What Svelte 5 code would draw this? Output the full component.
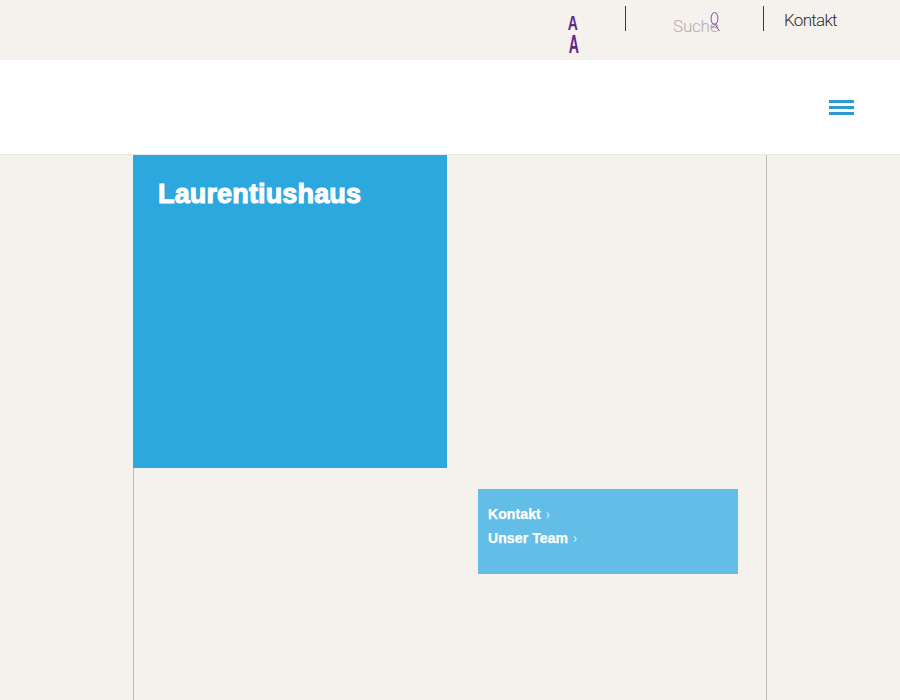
<script>
	let links = ["Kontakt", "Unser Team"];
</script>

<div class="page">
	<header class="topbar">
		<div class="fontsize">
			<span class="a small">A</span>
			<span class="a big">A</span>
		</div>
		<div class="sep"></div>
		<div class="search">
			<span class="placeholder">Suche</span>
			<svg class="lens" width="12" height="22" viewBox="0 0 12 22" fill="none" stroke="#7d4fa0" stroke-width="1">
				<ellipse cx="4.5" cy="6.5" rx="3.4" ry="6" />
				<path d="M5 12.5 L9.5 19" />
				<path d="M1 15.5 L7 12.5" stroke="#a98fc0" />
			</svg>
		</div>
		<div class="sep"></div>
		<a class="contact" href="#kontakt">Kontakt</a>
	</header>

	<nav class="navbar">
		<div class="burger">
			<span></span>
			<span></span>
			<span></span>
		</div>
	</nav>

	<main class="content">
		<section class="hero">
			<h1>Laurentiushaus</h1>
		</section>
		<aside class="links">
			{#each links as link}
				<a href="#link">{link}<span class="chev">›</span></a>
			{/each}
		</aside>
	</main>
</div>

<style>
	:global(body) {
		margin: 0;
		background: #f5f1ed;
	}
	.page {
		min-height: 700px;
		display: flex;
		flex-direction: column;
		overflow: hidden;
		font-family: "Roboto", "Liberation Sans", sans-serif;
	}
	.topbar {
		height: 60px;
		display: flex;
		align-items: flex-start;
		box-sizing: border-box;
		padding-top: 6px;
		padding-left: 566px;
	}
	.fontsize {
		width: 59px;
		display: flex;
		flex-direction: column;
		align-items: flex-start;
		padding-top: 7px;
		color: #5b2a8a;
		font-family: "Liberation Sans", sans-serif;
		font-weight: 700;
	}
	.a {
		display: block;
		width: 12px;
		text-align: center;
	}
	.small {
		font-size: 20px;
		line-height: 20px;
		transform: scaleX(0.7);
	}
	.big {
		font-size: 26px;
		line-height: 23px;
		transform: scaleX(0.54);
	}
	.sep {
		width: 1px;
		height: 25px;
		background: #3c3a3c;
	}
	.search {
		position: relative;
		width: 137px;
		height: 40px;
	}
	.placeholder {
		position: absolute;
		left: 47px;
		top: 10px;
		font-size: 17px;
		font-weight: 300;
		letter-spacing: -0.2px;
		color: #b2aeac;
	}
	.lens {
		position: absolute;
		left: 84px;
		top: 6px;
	}
	.contact {
		margin-left: 20px;
		margin-top: 4px;
		font-size: 17px;
		font-weight: 300;
		letter-spacing: -0.7px;
		color: #2e2c2e;
		text-decoration: none;
	}
	.navbar {
		height: 95px;
		box-sizing: border-box;
		background: #fff;
		border-bottom: 1px solid #eae8e5;
		display: flex;
		align-items: center;
		justify-content: flex-end;
		padding-right: 46px;
	}
	.burger {
		width: 25px;
		display: flex;
		flex-direction: column;
		gap: 3px;
	}
	.burger span {
		height: 3px;
		background: #2d9ad6;
	}
	.content {
		flex: 1;
		margin-left: 133px;
		width: 634px;
		box-sizing: border-box;
		border-left: 1px solid #bfbbb8;
		border-right: 1px solid #bfbbb8;
		display: grid;
		grid-template-columns: 313px 260px;
		grid-template-rows: 313px auto;
		column-gap: 31px;
	}
	.hero {
		margin-left: -1px;
		background: #2ba9df;
		box-sizing: border-box;
		padding: 22px 25px;
	}
	h1 {
		margin: 0;
		font-family: "Liberation Sans", sans-serif;
		font-size: 27px;
		line-height: 34px;
		font-weight: 700;
		letter-spacing: 0.15px;
		color: #fff;
		-webkit-text-stroke: 1.1px #fff;
	}
	.links {
		grid-column: 2;
		grid-row: 2;
		margin-top: 21px;
		height: 85px;
		box-sizing: border-box;
		padding: 13px 10px;
		background: #62bde7;
		display: flex;
		flex-direction: column;
	}
	.links a {
		font-family: "Liberation Sans", sans-serif;
		font-size: 14px;
		line-height: 24px;
		font-weight: 700;
		letter-spacing: 0.1px;
		color: #fff;
		text-decoration: none;
		-webkit-text-stroke: 0.25px #fff;
	}
	.chev {
		margin-left: 5px;
		font-family: "Roboto", sans-serif;
		font-weight: 300;
		-webkit-text-stroke: 0;
	}
</style>
